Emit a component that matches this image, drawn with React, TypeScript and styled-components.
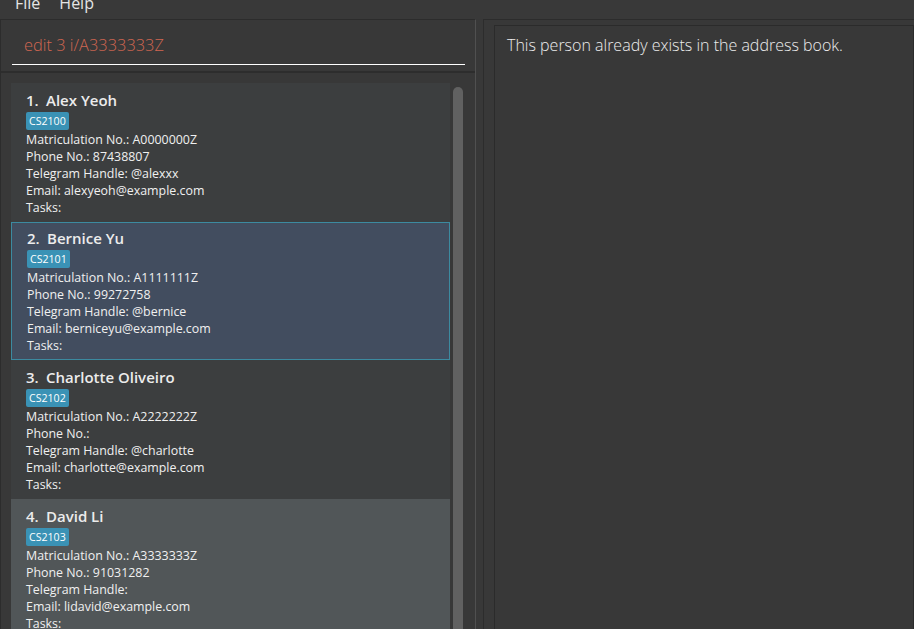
import React from "react";
import styled, { createGlobalStyle } from "styled-components";

const Global = createGlobalStyle`
  html, body { margin: 0; padding: 0; background: #383838; overflow: hidden; }
  #root { width: 914px; height: 629px; }
  * { box-sizing: border-box; }
`;

const Window = styled.div`
  width: 914px;
  height: 629px;
  display: flex;
  flex-direction: column;
  background: #383838;
  overflow: hidden;
  font-family: "Open Sans", "Noto Sans", sans-serif;
`;

const MenuBar = styled.div`
  height: 19px;
  flex: none;
  display: flex;
  gap: 19px;
  padding-left: 15px;
  background: #393939;
  overflow: hidden;
`;

const MenuItem = styled.span`
  color: #e4e4e4;
  font-size: 16px;
  line-height: 16px;
  margin-top: -5px;
`;

const Main = styled.div`
  flex: 1;
  display: flex;
  min-height: 0;
`;

const LeftPane = styled.div`
  width: 476px;
  flex: none;
  display: flex;
  flex-direction: column;
  border-top: 1px solid #2c2c2c;
  border-left: 1px solid #2c2c2c;
  border-right: 1px solid #505050;
`;

const CommandSection = styled.div`
  flex: none;
  height: 53px;
  padding: 8px 10px 0 11px;
  border-bottom: 2px solid #2d2d2d;
`;

const CommandField = styled.div`
  height: 37px;
  border-bottom: 1px solid #ffffff;
  padding: 0 0 4px 12px;
  display: flex;
  align-items: center;
  font-size: 16.4px;
  font-weight: 300;
  color: #d06651;
`;

const ListSection = styled.div`
  flex: 1;
  min-height: 0;
  display: flex;
  padding: 10px 10px 0 10px;
  overflow: hidden;
`;

const CardColumn = styled.div`
  width: 439px;
  flex: none;
  display: flex;
  flex-direction: column;
`;

const ScrollTrack = styled.div`
  width: 15px;
  flex: none;
  padding: 4px 2px 0 3px;
  display: flex;
`;

const ScrollThumb = styled.div`
  flex: 1;
  background: #616161;
  border-radius: 5px 5px 0 0;
`;

type CardKind = "even" | "odd" | "selected";

const Card = styled.div<{ $kind: CardKind }>`
  flex: none;
  height: 138.67px;
  padding: ${(p) => (p.$kind === "selected" ? "4px 5px 5px 15px" : "5px 5px 5px 15px")};
  display: flex;
  flex-direction: column;
  background: ${(p) =>
    p.$kind === "selected" ? "#424d5f" : p.$kind === "odd" ? "#515658" : "#3c3e3f"};
  border: ${(p) => (p.$kind === "selected" ? "1px solid #3c8aa0" : "none")};
`;

const NameRow = styled.div`
  height: 24px;
  display: flex;
  align-items: center;
  color: #ececec;
  font-size: 15px;
  font-weight: 600;
  white-space: pre;
`;

const IdLabel = styled.span`
  width: 20px;
`;

const Tags = styled.div`
  height: 18px;
  margin-bottom: 1px;
  display: flex;
  gap: 4px;
`;

const Tag = styled.span`
  height: 18px;
  padding: 0 3px;
  display: flex;
  align-items: center;
  background: #3a92b5;
  color: #ffffff;
  font-size: 10.6px;
  border-radius: 2px;
`;

const Field = styled.div`
  height: 17px;
  line-height: 17px;
  color: #f0f0f0;
  font-size: 12.4px;
  white-space: nowrap;
`;

const RightPane = styled.div`
  flex: 1;
  margin-left: 7px;
  border-top: 1px solid #2c2c2c;
  border-left: 1px solid #2c2c2c;
  padding: 5px 0 0 10px;
  display: flex;
`;

const ResultBox = styled.div`
  flex: 1;
  border: 1px solid #2b2b2b;
  border-bottom: none;
  padding: 8px 12px;
  color: #ededed;
  font-size: 16px;
  font-weight: 300;
  line-height: 23px;
`;

type Person = {
  name: string;
  tag: string;
  matric: string;
  phone: string;
  telegram: string;
  email: string;
};

const people: Person[] = [
  { name: "Alex Yeoh", tag: "CS2100", matric: "A0000000Z", phone: "87438807", telegram: "@alexxx", email: "alexyeoh@example.com" },
  { name: "Bernice Yu", tag: "CS2101", matric: "A1111111Z", phone: "99272758", telegram: "@bernice", email: "berniceyu@example.com" },
  { name: "Charlotte Oliveiro", tag: "CS2102", matric: "A2222222Z", phone: "", telegram: "@charlotte", email: "charlotte@example.com" },
  { name: "David Li", tag: "CS2103", matric: "A3333333Z", phone: "91031282", telegram: "", email: "lidavid@example.com" },
];

export default function App() {
  return (
    <>
      <Global />
      <Window>
        <MenuBar>
          <MenuItem>File</MenuItem>
          <MenuItem>Help</MenuItem>
        </MenuBar>
        <Main>
          <LeftPane>
            <CommandSection>
              <CommandField>edit 3 i/A3333333Z</CommandField>
            </CommandSection>
            <ListSection>
              <CardColumn>
                {people.map((p, i) => (
                  <Card key={p.name} $kind={i === 1 ? "selected" : i % 2 === 1 ? "odd" : "even"}>
                    <NameRow>
                      <IdLabel>{i + 1}.</IdLabel>
                      <span>{p.name}</span>
                    </NameRow>
                    <Tags>
                      <Tag>{p.tag}</Tag>
                    </Tags>
                    <Field>Matriculation No.: {p.matric}</Field>
                    <Field>Phone No.: {p.phone}</Field>
                    <Field>Telegram Handle: {p.telegram}</Field>
                    <Field>Email: {p.email}</Field>
                    <Field>Tasks:</Field>
                  </Card>
                ))}
              </CardColumn>
              <ScrollTrack>
                <ScrollThumb />
              </ScrollTrack>
            </ListSection>
          </LeftPane>
          <RightPane>
            <ResultBox>This person already exists in the address book.</ResultBox>
          </RightPane>
        </Main>
      </Window>
    </>
  );
}
